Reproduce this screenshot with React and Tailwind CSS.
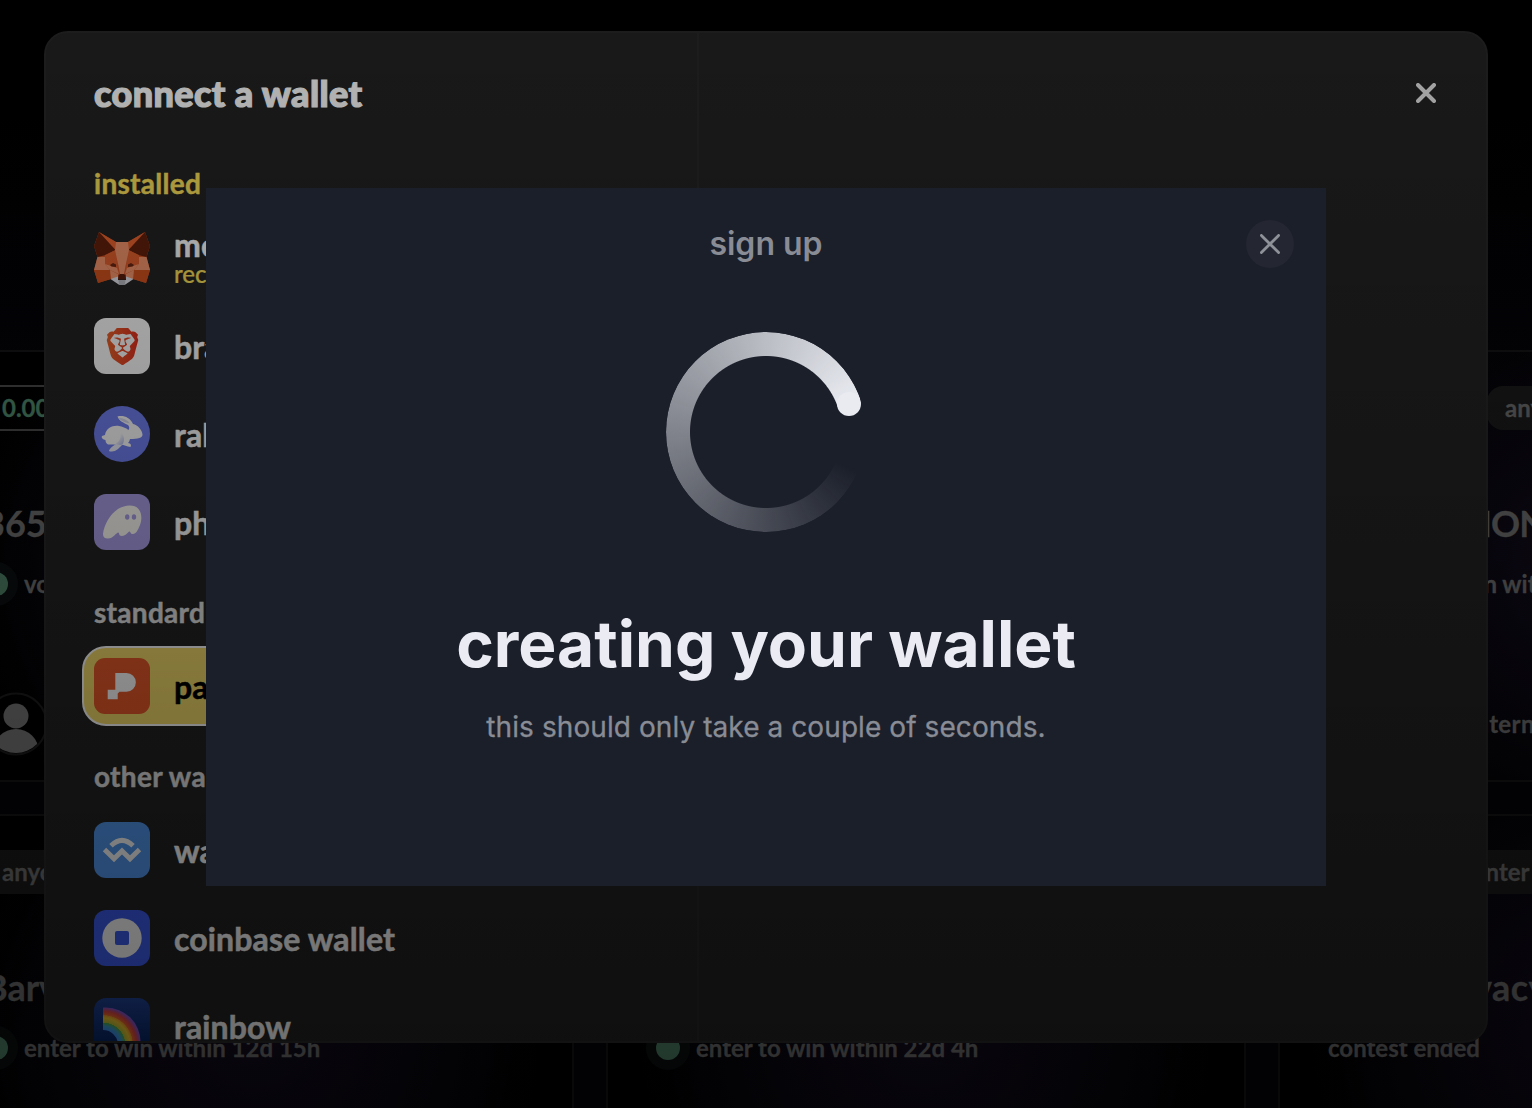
import React from "react";
import { SiBrave } from "react-icons/si";

const MetamaskIcon = () => (
  <svg viewBox="0 0 56 56" className="size-14">
    {["", "translate(56 0) scale(-1 1)"].map((transform, index) => (
      <g key={index} transform={transform}>
        <path d="M5 2 22 12H28V49L17 49 4 53 0 40 3.5 27 0 16Z" fill="#d95728" />
        <path d="M5 2 22 12 21.5 20Z" fill="#ec642f" />
        <path d="M5 2 0 16 3.5 27 12 25 21.5 20Z" fill="#63200c" />
        <path d="M3.5 27H12V34L16 40H0Z" fill="#f6966d" />
        <path d="M0 40H16L17 49 4 53Z" fill="#d2521f" />
        <path d="M11 25 21.5 20 25 44 16 40 11 34Z" fill="#e3602e" />
        <path d="M11 34 23 38 25 44 16 40Z" fill="#f6966d" />
        <path d="M16 40 24 44 24 49 17 49Z" fill="#f6966d" />
        <path d="M16 35 19 33 22 34.5 22 37 17.5 36.5Z" fill="#6b2714" />
        <path d="M22 12H28V44H26L24.5 36 21 20Z" fill="#f6966d" />
        <path d="M16.5 49 24 46.5V50H28V54.8H25Z" fill="#e4e5ef" />
        <path d="M24.5 50H28V54.8H25Z" fill="#b9bac4" />
        <path d="M26 44H28V49.5H24L24.5 45.5Z" fill="#5a1e0e" />
      </g>
    ))}
  </svg>
);

const BraveIcon = () => (
  <div className="flex size-14 items-center justify-center rounded-xl bg-white">
    <svg width="0" height="0" className="absolute">
      <linearGradient id="brave" x1="0" x2="1" y1="0" y2="0">
        <stop offset="0" stopColor="#e8622b" />
        <stop offset="1" stopColor="#e5301f" />
      </linearGradient>
    </svg>
    <SiBrave size={37} fill="url(#brave)" />
  </div>
);

const RabbyIcon = () => (
  <svg viewBox="0 0 56 56" className="size-14">
    <defs>
      <linearGradient id="rabby" x1="0" x2="1" y1="0" y2="1">
        <stop offset="0.4" stopColor="#fff" />
        <stop offset="1" stopColor="#b4bcf0" />
      </linearGradient>
    </defs>
    <circle cx="28" cy="28" r="28" fill="#7180f2" />
    <path d="M15 44.500C16 42 19 40 22 38L28 39C25 42 22 45.500 18 45.500C16 45.500 15 45.500 15 44.500Z" fill="#f0f1ff" />
    <path
      d="M23.500 10.500C29 9 36 11 39 18C44 19 48 24 48.500 28.500C48.500 32 44 33 36 33C35.500 35 35 36 34 37C37 37.500 37.500 39 36.500 41C33 41 30 38.500 27 38.500H14C12 37 11.500 36 11.500 34C9 33.500 7 32 8 30C9 29.500 10 29.500 11 29C12 22 19 19 25 20C28 20.500 32 22 34.500 24C36 22 35 20 34 19C30 17 25 15 23.500 10.500Z"
      fill="#fff"
    />
    <path d="M25 26C30 28 31 33 29 38L20 38.500C26 36 28 31 25 26Z" fill="url(#rabby)" />
    <path d="M24.500 11.800C29 12 33 14 36 17.500C31 17 27 15 24.500 11.800Z" fill="#d9dcf5" />
  </svg>
);

const PhantomIcon = () => (
  <svg viewBox="0 0 56 56" className="size-14">
    <rect width="56" height="56" rx="12" fill="#ab9fe9" />
    <path
      d="M9 40C10 31 16 20 24 15C31 11 40 10 44.500 15C48 19 48 26 46 31C44 36 42 40 39 40C36 40 37 38 35.500 37.500C33.500 38 32 42 28 42C24 42 26 38.500 24 38.500C22 39 19 44.500 14 44.500C10.500 44.500 9 43 9 40Z"
      fill="#fffdf8"
    />
    <ellipse cx="33.200" cy="23" rx="2.200" ry="2.800" fill="#ab9fe9" />
    <ellipse cx="40" cy="23" rx="2.200" ry="2.800" fill="#ab9fe9" />
  </svg>
);

const ParticleIcon = () => (
  <svg viewBox="0 0 56 56" className="size-14">
    <rect width="56" height="56" rx="11" fill="#e85a2a" />
    <path
      d="M21.300 15H32.500A9.300 9.300 0 0 1 32.500 33.700H25.500L23.700 35.500V41.300H13.700V31.700H21.300Z"
      fill="#fff"
    />
  </svg>
);

const WalletConnectIcon = () => (
  <svg viewBox="0 0 56 56" className="size-14">
    <rect width="56" height="56" rx="12" fill="#5298f0" />
    <g fill="none" stroke="#fff" strokeWidth="4.900">
      <path d="M17 23.800Q28 13 39 23.800" />
      <path d="M10.500 27.500 20 36.800 28 28.900 36 36.800 45.500 27.500" />
    </g>
  </svg>
);

const CoinbaseIcon = () => (
  <svg viewBox="0 0 56 56" className="size-14">
    <rect width="56" height="56" rx="12" fill="#3e5df0" />
    <circle cx="28" cy="28" r="19.700" fill="#fff" />
    <rect x="21" y="21" width="14" height="14" rx="2" fill="#3e5df0" />
  </svg>
);

const RainbowIcon = () => (
  <svg viewBox="0 0 56 56" className="size-14">
    <defs>
      <linearGradient id="night" x1="0" x2="0" y1="0" y2="1">
        <stop offset="0" stopColor="#214296" />
        <stop offset="1" stopColor="#001e59" />
      </linearGradient>
      <radialGradient id="bow" gradientUnits="userSpaceOnUse" cx="9" cy="47" r="37.500">
        <stop offset="0.390" stopColor="#3d8cf0" />
        <stop offset="0.500" stopColor="#3f9fd0" />
        <stop offset="0.590" stopColor="#4fb04f" />
        <stop offset="0.600" stopColor="#b8c23a" />
        <stop offset="0.720" stopColor="#f0c62f" />
        <stop offset="0.790" stopColor="#ee9a2c" />
        <stop offset="0.800" stopColor="#ee6a2c" />
        <stop offset="0.900" stopColor="#dd4545" />
        <stop offset="1" stopColor="#8754c9" />
      </radialGradient>
    </defs>
    <rect width="56" height="56" rx="12" fill="url(#night)" />
    <path d="M9 9.500H12A34.500 34.500 0 0 1 46.500 44V47H24A15 15 0 0 0 9 32Z" fill="url(#bow)" />
  </svg>
);

const groups = [
  {
    title: "installed",
    titleClass: "text-[#ffe25b] mb-[21px]",
    wallets: [
      { name: "metamask", note: "recent", Icon: MetamaskIcon },
      { name: "brave wallet", Icon: BraveIcon },
      { name: "rabby wallet", Icon: RabbyIcon },
      { name: "phantom", Icon: PhantomIcon },
    ],
  },
  {
    title: "standard",
    titleClass: "text-[#e5e5e5] mb-5",
    wallets: [{ name: "para", Icon: ParticleIcon, selected: true }],
  },
  {
    title: "other wallets",
    titleClass: "text-[#e5e5e5] mb-5",
    wallets: [
      { name: "walletconnect", Icon: WalletConnectIcon },
      { name: "coinbase wallet", Icon: CoinbaseIcon },
      { name: "rainbow", Icon: RainbowIcon },
    ],
  },
];

const contests = [
  { tags: ["0.001 eth"], paid: true, title: "365 days", status: "vote within 3d 4h", author: "anon" },
  { tags: ["anyone can enter"], title: "open call", status: "vote within 2d 1h", author: "anon" },
  {
    tags: ["free entry", "anyone"],
    title: "PROMOTION",
    titleClass: "tracking-[-0.8px]",
    status: "enter to win within 9d 2h",
    author: "anon intern",
    authorClass: "tracking-[0.4px]",
  },
  { tags: ["anyone can enter"], title: "Barvest", status: "enter to win within 12d 15h", author: "anon" },
  { tags: ["anyone can enter"], title: "builders", status: "enter to win within 22d 4h", author: "anon" },
  {
    tags: ["anyone can enter"],
    title: "web3 privacy",
    titleClass: "tracking-[0.5px]",
    status: "contest ended",
    ended: true,
    author: "anon",
  },
];

const WalletRow = ({ wallet }) => {
  const { name, note, Icon, selected } = wallet;
  return (
    <div
      className={`-mx-3 flex h-20 shrink-0 items-center gap-6 rounded-3xl border-2 px-2.5 ${
        selected ? "border-white bg-[#f5dc6b] text-black" : "border-transparent text-white"
      }`}
    >
      <Icon />
      <div>
        <p
          className={`text-[32px] font-bold tracking-[0.15px] [-webkit-text-stroke:0.5px] ${
            note ? "leading-[30px]" : "mt-0.5 leading-10"
          }`}
        >
          {name}
        </p>
        {note && (
          <p className="text-2xl leading-[27px] font-medium text-[#ffe25b] [-webkit-text-stroke:0.2px]">{note}</p>
        )}
      </div>
    </div>
  );
};

const ContestCard = ({ contest }) => (
  <div className="h-[432px] rounded-2xl border-2 border-[#151517] bg-black bg-[radial-gradient(circle_at_center,#140d20_0%,#0b0813_35%,#000_75%)] px-12 pt-[34px] text-[#6f6f6f] [-webkit-text-stroke:0.3px]">
    <div className="flex h-11 gap-4 text-2xl font-bold whitespace-nowrap">
      {contest.tags.map((tag) => (
        <span
          key={tag}
          className={`flex min-w-[143px] items-center rounded-2xl border-2 px-4 ${
            contest.paid ? "-my-px border-[#4b4b4b] text-[#508a6d]" : "border-transparent bg-[#1b1b1b]"
          }`}
        >
          {tag}
        </span>
      ))}
    </div>
    <p className={`mt-[70px] text-4xl leading-[46px] font-bold whitespace-nowrap ${contest.titleClass ?? ""}`}>
      {contest.title}
    </p>
    <div className="mt-[22px] flex h-8 items-center gap-4">
      {!contest.ended && <span className="size-6 rounded-full bg-[#4f8268] ring-[10px] ring-[#0b0f10]" />}
      <span className="text-2xl font-bold whitespace-nowrap">{contest.status}</span>
    </div>
    <div className="mt-[92px] flex items-center gap-4">
      <svg viewBox="0 0 64 64" className="size-16">
        <clipPath id="avatar">
          <circle cx="32" cy="32" r="29" />
        </clipPath>
        <circle cx="32" cy="32" r="30.500" fill="#000" stroke="#1c1c1c" strokeWidth="2" />
        <g clipPath="url(#avatar)" fill="#777">
          <circle cx="32" cy="24" r="12.500" />
          <circle cx="32" cy="60" r="23" />
        </g>
      </svg>
      <span className={`text-2xl font-bold whitespace-nowrap ${contest.authorClass ?? ""}`}>{contest.author}</span>
    </div>
  </div>
);

const SignUpModal = () => (
  <div className="flex h-[698px] w-[1120px] flex-col items-center bg-[#1b1f2a] font-['Inter',sans-serif]">
    <div className="grid h-28 w-full grid-cols-[48px_1fr_48px] items-center px-8">
      <span />
      <h2 className="text-center text-[32px] font-semibold text-[#898c94]">sign up</h2>
      <button className="flex size-12 items-center justify-center rounded-full bg-[#242731]">
        <svg viewBox="0 0 20 20" className="size-5" stroke="#8f9198" strokeWidth="2.800" strokeLinecap="round">
          <path d="M1.400 1.400 18.600 18.600M18.600 1.400 1.400 18.600" />
        </svg>
      </button>
    </div>
    <div className="relative mt-8 size-[200px]">
      <div className="size-full rounded-full bg-[conic-gradient(from_112deg,#e9ebf100_0deg,#e9ebf1_319deg,#e9ebf100_319deg)] [mask-image:radial-gradient(circle,transparent_75.500px,#000_76.500px)]" />
      <span className="absolute top-[60px] left-[171px] size-6 rounded-full bg-[#e9ebf1]" />
    </div>
    <h1 className="mt-[72px] text-[64px] leading-20 font-bold text-[#ebecf3]">creating your wallet</h1>
    <p className="mt-[23px] text-[28px] leading-10 tracking-[0.08px] text-[#898c94] [-webkit-text-stroke:0.3px]">
      this should only take a couple of seconds.
    </p>
  </div>
);

const WalletModal = () => (
  <div className="flex h-[1012px] w-[1444px] overflow-hidden rounded-3xl border-2 border-[#282828] bg-[#232323]">
    <div className="flex w-[653px] shrink-0 flex-col border-r-2 border-[#282828] px-12">
      <h1 className="mt-[37px] text-4xl leading-[46px] font-black tracking-[0.4px] text-white [-webkit-text-stroke:1.2px]">
        connect a wallet
      </h1>
      <div className="mt-[53px] flex flex-col">
        {groups.map(({ title, titleClass, wallets }, index) => (
          <div key={title} className={index > 0 ? "mt-9" : ""}>
            <h3
              className={`text-[28px] leading-7 font-bold tracking-[0.3px] [-webkit-text-stroke:0.4px] ${titleClass}`}
            >
              {title}
            </h3>
            <div className="flex flex-col gap-2">
              {wallets.map((wallet) => (
                <WalletRow key={wallet.name} wallet={wallet} />
              ))}
            </div>
          </div>
        ))}
      </div>
    </div>
    <div className="flex flex-1 justify-end pt-[50px] pr-[50px]">
      <svg viewBox="0 0 20 20" className="size-5" stroke="#e8e8e8" strokeWidth="4" strokeLinecap="round">
        <path d="M2 2 18 18M18 2 2 18" />
      </svg>
    </div>
  </div>
);

const App = () => {
  return (
    <div className="relative h-[1108px] w-[1532px] overflow-hidden bg-[linear-gradient(#000_10%,#040309_35%)] font-['Lato',sans-serif]">
      <div className="-ml-[66px] grid w-max grid-cols-[640px_640px_640px] gap-8 pt-[350px]">
        {contests.map((contest) => (
          <ContestCard key={contest.title} contest={contest} />
        ))}
      </div>
      <div className="absolute inset-0 flex justify-center pt-[31px]">
        <WalletModal />
      </div>
      <div className="absolute inset-0 bg-linear-to-b from-black/28 to-black/58" />
      <div className="absolute inset-0 flex justify-center pt-[188px]">
        <SignUpModal />
      </div>
    </div>
  );
};

export default App;
